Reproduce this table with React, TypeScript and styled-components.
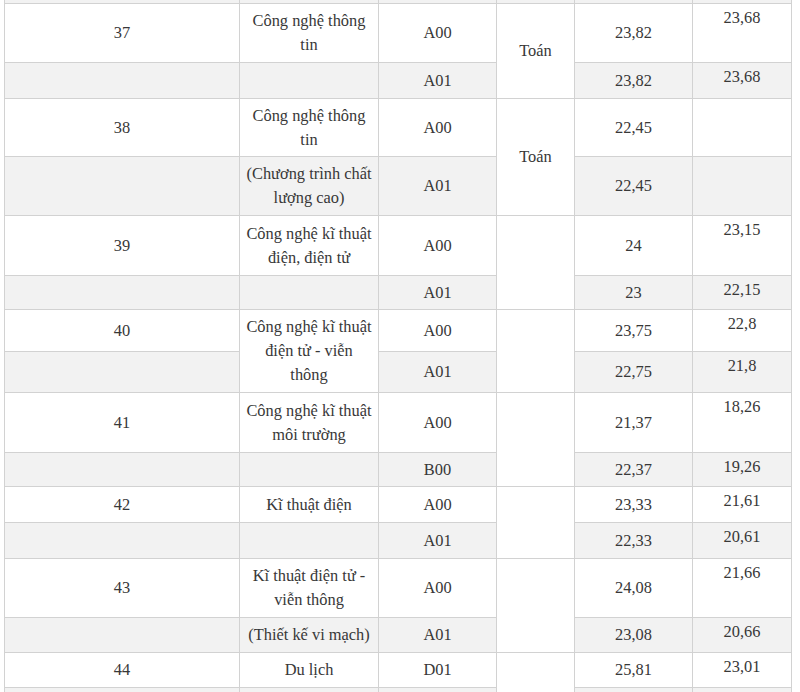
import React from 'react';
import styled, { createGlobalStyle } from 'styled-components';

const GlobalStyle = createGlobalStyle`
  html, body {
    margin: 0;
    padding: 0;
    background: #fff;
  }
`;

const Viewport = styled.div`
  height: 692px;
  overflow: hidden;
`;

const Table = styled.table`
  margin-left: 4px;
  width: 787px;
  table-layout: fixed;
  border-collapse: collapse;
  font-family: 'Liberation Serif', 'Times New Roman', serif;
  font-size: 16.4px;
  line-height: 24px;
  color: #383838;
`;

const Row = styled.tr<{ $h: number }>`
  height: ${(p) => p.$h}px;

  &:nth-child(odd) {
    background: #f2f2f2;
  }
`;

const Cell = styled.td<{ $top?: boolean }>`
  border: 1px solid #d2d2d2;
  padding: ${(p) => (p.$top ? '2px 5px 0' : '1px 5px 0')};
  text-align: center;
  vertical-align: ${(p) => (p.$top ? 'top' : 'middle')};
  white-space: pre-line;
`;

const EdgeCell = styled.td`
  border: 1px solid #d2d2d2;
  border-top: none;
  padding: 0;
`;

type Entry = {
  h: number;
  stt: string;
  // null = covered by the cell above (rowspan)
  name: string | null;
  nameSpan?: number;
  combo: string;
  subj: string | null;
  subjSpan?: number;
  score: string;
  prev: string;
};

const rows: Entry[] = [
  { h: 59, stt: '37', name: 'Công nghệ thông tin', combo: 'A00', subj: 'Toán', subjSpan: 2, score: '23,82', prev: '23,68' },
  { h: 36, stt: '', name: '', combo: 'A01', subj: null, score: '23,82', prev: '23,68' },
  { h: 58, stt: '38', name: 'Công nghệ thông tin', combo: 'A00', subj: 'Toán', subjSpan: 2, score: '22,45', prev: '' },
  { h: 59, stt: '', name: '(Chương trình chất lượng cao)', combo: 'A01', subj: null, score: '22,45', prev: '' },
  { h: 60, stt: '39', name: 'Công nghệ kĩ thuật điện, điện tử', combo: 'A00', subj: '', subjSpan: 2, score: '24', prev: '23,15' },
  { h: 34, stt: '', name: '', combo: 'A01', subj: null, score: '23', prev: '22,15' },
  { h: 42, stt: '40', name: 'Công nghệ kĩ thuật điện tử - viễn\nthông', nameSpan: 2, combo: 'A00', subj: '', subjSpan: 2, score: '23,75', prev: '22,8' },
  { h: 41, stt: '', name: null, combo: 'A01', subj: null, score: '22,75', prev: '21,8' },
  { h: 60, stt: '41', name: 'Công nghệ kĩ thuật môi trường', combo: 'A00', subj: '', subjSpan: 2, score: '21,37', prev: '18,26' },
  { h: 34, stt: '', name: '', combo: 'B00', subj: null, score: '22,37', prev: '19,26' },
  { h: 36, stt: '42', name: 'Kĩ thuật điện', combo: 'A00', subj: '', subjSpan: 2, score: '23,33', prev: '21,61' },
  { h: 36, stt: '', name: '', combo: 'A01', subj: null, score: '22,33', prev: '20,61' },
  { h: 59, stt: '43', name: 'Kĩ thuật điện tử - viễn thông', combo: 'A00', subj: '', subjSpan: 2, score: '24,08', prev: '21,66' },
  { h: 35, stt: '', name: '(Thiết kế vi mạch)', combo: 'A01', subj: null, score: '23,08', prev: '20,66' },
  { h: 35, stt: '44', name: 'Du lịch', combo: 'D01', subj: '', subjSpan: 2, score: '25,81', prev: '23,01' },
  { h: 35, stt: '', name: '', combo: '', subj: null, score: '', prev: '' },
];

export default function App() {
  return (
    <Viewport>
      <GlobalStyle />
      <Table>
        <colgroup>
          <col style={{ width: 235 }} />
          <col style={{ width: 139 }} />
          <col style={{ width: 118 }} />
          <col style={{ width: 78 }} />
          <col style={{ width: 118 }} />
          <col style={{ width: 99 }} />
        </colgroup>
        <tbody>
          <Row $h={3}>
            <EdgeCell />
            <EdgeCell />
            <EdgeCell />
            <EdgeCell />
            <EdgeCell />
            <EdgeCell />
          </Row>
          {rows.map((r, i) => (
            <Row key={i} $h={r.h}>
              <Cell>{r.stt}</Cell>
              {r.name !== null && <Cell rowSpan={r.nameSpan}>{r.name}</Cell>}
              <Cell>{r.combo}</Cell>
              {r.subj !== null && <Cell rowSpan={r.subjSpan}>{r.subj}</Cell>}
              <Cell>{r.score}</Cell>
              <Cell $top>{r.prev}</Cell>
            </Row>
          ))}
        </tbody>
      </Table>
    </Viewport>
  );
}
